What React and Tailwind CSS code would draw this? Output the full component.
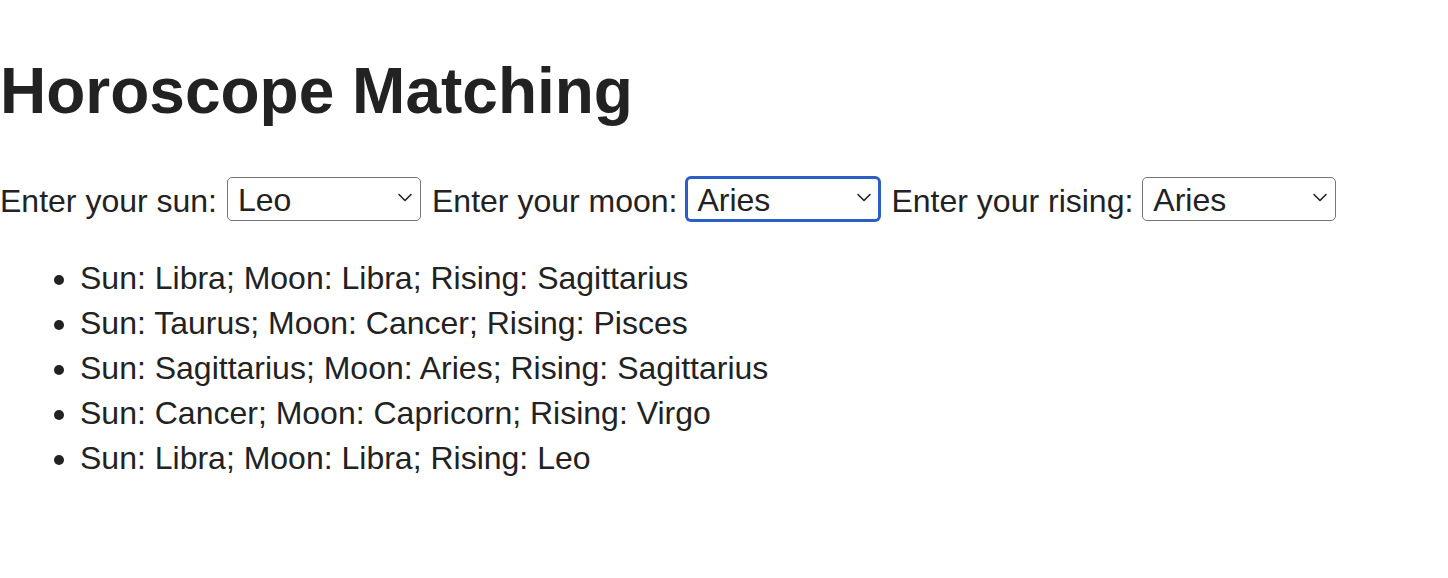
import React from 'react'

const SIGNS = [
  'Aries',
  'Taurus',
  'Gemini',
  'Cancer',
  'Leo',
  'Virgo',
  'Libra',
  'Scorpio',
  'Sagittarius',
  'Capricorn',
  'Aquarius',
  'Pisces',
]

const MATCHES = [
  { sun: 'Libra', moon: 'Libra', rising: 'Sagittarius' },
  { sun: 'Taurus', moon: 'Cancer', rising: 'Pisces' },
  { sun: 'Sagittarius', moon: 'Aries', rising: 'Sagittarius' },
  { sun: 'Cancer', moon: 'Capricorn', rising: 'Virgo' },
  { sun: 'Libra', moon: 'Libra', rising: 'Leo' },
]

function SignSelect({ value, focused }) {
  return (
    <div className="relative w-[194px] h-[44px] shrink-0">
      <select
        defaultValue={value}
        className={
          focused
            ? 'appearance-none w-full h-full bg-white rounded-[5px] border-2 border-[#2a5fc8] ring-1 ring-[#2a5fc8] pl-[9px] pt-[2px] text-[32px] leading-none text-[#222] outline-none'
            : 'appearance-none w-full h-full bg-white rounded-[5px] border border-[#767676] pl-[10px] pt-[2px] text-[32px] leading-none text-[#222] outline-none'
        }
      >
        {SIGNS.map((s) => (
          <option key={s} value={s}>
            {s}
          </option>
        ))}
      </select>
      <svg
        className="absolute right-[9px] top-[17px] pointer-events-none"
        width="14"
        height="9"
        viewBox="0 0 14 9"
        fill="none"
      >
        <path d="M1 1.5 L7 7.5 L13 1.5" stroke="#222" strokeWidth="1.6" strokeLinecap="round" strokeLinejoin="round" />
      </svg>
    </div>
  )
}

export default function App() {
  return (
    <div className="min-h-screen bg-white text-[#222] font-['Liberation_Sans','Helvetica',sans-serif] text-[32px]">
      <h1 className="pt-[59px] text-[64px] font-bold leading-[64px]">Horoscope Matching</h1>

      <div className="mt-[53px] flex items-center h-[44px]">
        <label className="mr-[10px] pt-[6px] whitespace-nowrap">Enter your sun:</label>
        <SignSelect value="Leo" />
        <label className="ml-[11px] mr-[9px] pt-[6px] whitespace-nowrap">Enter your moon:</label>
        <SignSelect value="Aries" focused />
        <label className="ml-[11px] mr-[9px] pt-[6px] whitespace-nowrap">Enter your rising:</label>
        <SignSelect value="Aries" />
      </div>

      <ul className="mt-[36px] list-disc pl-[80px]">
        {MATCHES.map((m, i) => (
          <li key={i} className="leading-[45px]">
            Sun: {m.sun}; Moon: {m.moon}; Rising: {m.rising}
          </li>
        ))}
      </ul>
    </div>
  )
}
